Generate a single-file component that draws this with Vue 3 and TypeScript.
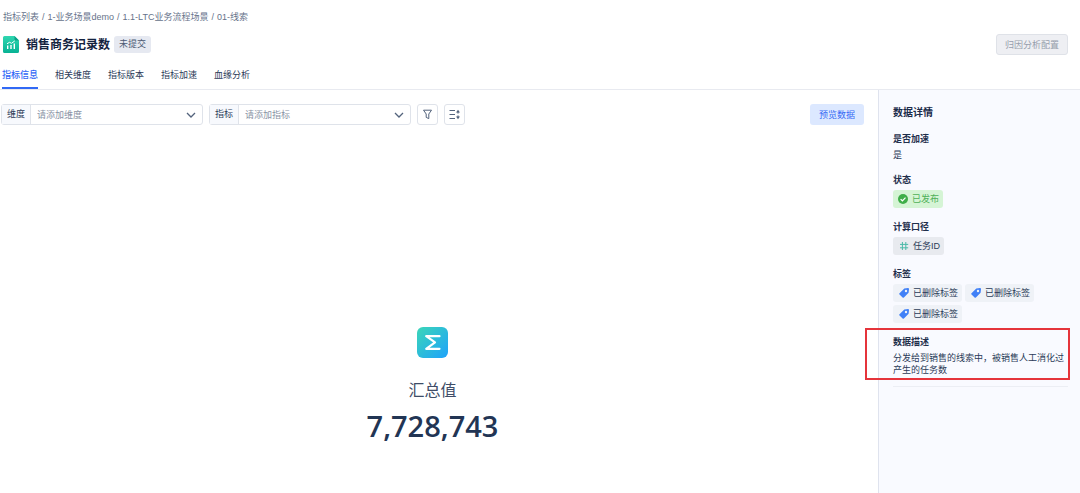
<script setup lang="ts">
import { ref } from 'vue'

interface Field {
  id: string
  label: string
  placeholder: string
}

const crumbs: string[] = ['指标列表', '1-业务场景demo', '1.1-LTC业务流程场景', '01-线索']
const tabs: string[] = ['指标信息', '相关维度', '指标版本', '指标加速', '血缘分析']
const activeTab = ref(tabs[0])
const fields: Field[] = [
  { id: 'dimension', label: '维度', placeholder: '请添加维度' },
  { id: 'metric', label: '指标', placeholder: '请添加指标' },
]
const tags: string[] = ['已删除标签', '已删除标签', '已删除标签']
const total = (7728743).toLocaleString('en-US')
</script>

<template>
  <div class="page">
    <header class="header">
      <nav class="crumbs">
        <template v-for="(crumb, i) in crumbs" :key="crumb">
          <span v-if="i > 0">/</span>
          <a href="#">{{ crumb }}</a>
        </template>
      </nav>
      <div class="title-row">
        <svg class="title-icon" viewBox="0 0 16 17">
          <defs>
            <linearGradient id="doc" x1="0" y1="0" x2="0" y2="1">
              <stop offset="0" stop-color="#2fd6b0" />
              <stop offset="1" stop-color="#08b294" />
            </linearGradient>
          </defs>
          <path d="M1.5 0H11.5L16 4.5V15.5A1.5 1.5 0 0 1 14.5 17H1.5A1.5 1.5 0 0 1 0 15.5V1.5A1.5 1.5 0 0 1 1.5 0Z" fill="url(#doc)" />
          <path d="M11.5 0L16 4.5H12.5A1 1 0 0 1 11.5 3.5Z" fill="#0b9f86" />
          <path d="M4 7.8L6.5 6.3L8.5 7.3L11.8 4.9" fill="none" stroke="#fff" stroke-width="1" />
          <path d="M4.7 9.5V13M8 9V13M11.3 7.5V13" stroke="#fff" stroke-width="1.4" />
        </svg>
        <h1>销售商务记录数</h1>
        <span class="draft">未提交</span>
        <button class="config" type="button" disabled>归因分析配置</button>
      </div>
      <div class="tabs" role="tablist">
        <button
          v-for="tab in tabs"
          :key="tab"
          type="button"
          role="tab"
          :aria-selected="tab === activeTab"
          :class="{ active: tab === activeTab }"
          @click="activeTab = tab"
        >{{ tab }}</button>
      </div>
    </header>

    <div class="body">
      <main class="main">
        <div class="toolbar">
          <div v-for="field in fields" :key="field.id" class="field">
            <label :for="field.id">{{ field.label }}</label>
            <div class="picker">
              <select :id="field.id">
                <option>{{ field.placeholder }}</option>
              </select>
              <svg viewBox="0 0 10 6"><path d="M1 1L5 5L9 1" fill="none" stroke="#53637c" stroke-width="1.3" /></svg>
            </div>
          </div>
          <button class="tool" type="button" aria-label="筛选">
            <svg viewBox="0 0 11 11"><path d="M1.5 1.2H9.5L6.8 5V9.6L4.2 8.4V5Z" fill="none" stroke="#53637c" stroke-linejoin="round" /></svg>
          </button>
          <button class="tool" type="button" aria-label="排序">
            <svg viewBox="0 0 11 11">
              <path d="M.5 1.5H6M.5 5.5H6M.5 9.5H6M9 2V4.6M9 6.4V9" fill="none" stroke="#53637c" stroke-width="1.2" />
              <path d="M7 3.6L9 .8L11 3.6ZM7 7.4L9 10.2L11 7.4Z" fill="#53637c" />
            </svg>
          </button>
          <button class="preview" type="button">预览数据</button>
        </div>
        <section class="summary">
          <svg class="sigma" viewBox="0 0 31 31">
            <defs>
              <linearGradient id="sum" x1="0" y1="0" x2="1" y2="1">
                <stop offset="0" stop-color="#3bd6b8" />
                <stop offset="1" stop-color="#1ea2fb" />
              </linearGradient>
            </defs>
            <rect width="31" height="31" rx="6" fill="url(#sum)" />
            <path d="M22.5 9.2H9.2L18 15.3L9.2 21.8H22.5" fill="none" stroke="#fff" stroke-width="2.2" stroke-linecap="round" stroke-linejoin="round" />
          </svg>
          <div class="summary-label">汇总值</div>
          <div class="summary-value">{{ total }}</div>
        </section>
      </main>

      <aside class="details">
        <h2>数据详情</h2>
        <section>
          <h3>是否加速</h3>
          <p>是</p>
        </section>
        <section>
          <h3>状态</h3>
          <span class="chip published">
            <svg viewBox="0 0 10 10"><circle cx="5" cy="5" r="5" fill="#3fae49" /><path d="M2.6 5.1L4.4 6.8L7.5 3.6" fill="none" stroke="#fff" stroke-width="1.2" /></svg>
            已发布
          </span>
        </section>
        <section>
          <h3>计算口径</h3>
          <span class="chip caliber">
            <svg viewBox="0 0 10 10"><path d="M3.4 1V9M6.8 1V9M1 3.4H9.2M1 6.8H9.2" fill="none" stroke="#4bb9a8" /></svg>
            任务ID
          </span>
        </section>
        <section>
          <h3>标签</h3>
          <div class="chips">
            <span v-for="(tag, i) in tags" :key="i" class="chip">
              <svg viewBox="0 0 10 10">
                <path d="M5.3 .4L9 0Q10 0 10 .9L9.6 4.7L4.9 9.5Q4.2 10.1 3.6 9.5L.5 6.4Q-.1 5.8 .5 5.2Z" fill="#4080f7" />
                <circle cx="7" cy="3" r="1.2" fill="#eff2f7" />
              </svg>
              {{ tag }}
            </span>
          </div>
        </section>
        <section class="description">
          <h3>数据描述</h3>
          <p>分发给到销售的线索中，被销售人工消化过产生的任务数</p>
        </section>
      </aside>
    </div>
  </div>
</template>

<style>
body {
  margin: 0;
}
</style>

<style scoped>
.page {
  display: flex;
  flex-direction: column;
  min-height: 100vh;
  background: #fff;
  color: #2b3b58;
  font: 9px/12px "Liberation Sans", "Noto Sans CJK SC", sans-serif;
}
.page * {
  box-sizing: border-box;
}
h1, h2, h3, p {
  margin: 0;
}
button, select {
  margin: 0;
  padding: 0;
  border: 0;
  background: none;
  color: inherit;
  font: inherit;
}
svg {
  flex: none;
  display: block;
}
.header {
  border-bottom: 1px solid #e8eaf0;
  padding: 11px 12px 0 2px;
}
.crumbs {
  display: flex;
  gap: 3px;
  padding-left: 1px;
  color: #66728a;
}
.crumbs a {
  color: inherit;
  text-decoration: none;
}
.title-row {
  display: flex;
  align-items: center;
  height: 21px;
  margin-top: 11px;
}
.title-icon {
  width: 16px;
  height: 17px;
  margin-left: 1px;
}
h1 {
  margin-left: 7px;
  color: #14233f;
  font-size: 12px;
  line-height: 16px;
}
.draft {
  margin-left: 4px;
  padding: 3px 5px;
  border-radius: 3px;
  background: #e6e9f1;
  color: #4b5973;
  line-height: 11px;
}
.config {
  height: 21px;
  margin-left: auto;
  padding: 0 8px;
  border: 1px solid #dfe2e8;
  border-radius: 3px;
  background: #eeeff3;
  color: #969eac;
}
.tabs {
  display: flex;
  gap: 17px;
  margin-top: 11px;
}
.tabs button {
  height: 23px;
  padding-bottom: 3px;
  border-bottom: 2px solid transparent;
}
.tabs .active {
  border-color: #3169f5;
  color: #2f66f6;
  font-weight: 500;
}
.body {
  display: flex;
  flex: 1;
}
.main {
  flex: 1;
  padding: 14px 14px 0 1px;
}
.toolbar {
  display: flex;
  gap: 6px;
}
.field {
  display: flex;
  width: 202px;
  height: 21px;
  border: 1px solid #dfe3ea;
  border-radius: 3px;
}
.field label {
  padding: 0 5px;
  border-right: 1px solid #dfe3ea;
  background: #f7f9fd;
  line-height: 19px;
}
.picker {
  position: relative;
  flex: 1;
}
.picker select {
  width: 100%;
  height: 19px;
  padding: 0 20px 0 6px;
  appearance: none;
  color: #8993a5;
}
.picker svg {
  position: absolute;
  top: 7px;
  right: 6px;
  width: 10px;
  height: 6px;
  pointer-events: none;
}
.tool {
  display: grid;
  place-items: center;
  width: 21px;
  height: 21px;
  border: 1px solid #dfe3ea;
  border-radius: 3px;
}
.tool svg {
  width: 11px;
  height: 11px;
}
.preview {
  height: 21px;
  margin-left: auto;
  padding: 0 9px;
  border-radius: 3px;
  background: #dce8ff;
  color: #356af5;
}
.summary {
  display: flex;
  flex-direction: column;
  align-items: center;
  padding: 202px 0 32px;
}
.sigma {
  width: 31px;
  height: 31px;
}
.summary-label {
  margin-top: 21px;
  color: #3e4c67;
  font-size: 16px;
  line-height: 24px;
}
.summary-value {
  margin-top: 5px;
  color: #223554;
  font: 600 29px/36px "Open Sans", "Noto Sans", sans-serif;
}
.details {
  display: flex;
  flex-direction: column;
  gap: 13px;
  width: 202px;
  padding: 16px 12px 16px 14px;
  border-left: 1px solid #dfe3ee;
  background: #f9faff;
}
h2 {
  color: #1b2b49;
  font-size: 10px;
  line-height: 14px;
}
h3 {
  margin-bottom: 4px;
  color: #1f2f4c;
  font-size: 9px;
  line-height: 12px;
}
.chips {
  display: flex;
  flex-wrap: wrap;
  gap: 3px;
}
.chip {
  display: inline-flex;
  align-items: center;
  gap: 4px;
  height: 18px;
  padding: 0 4px 0 6px;
  border-radius: 3px;
  background: #eff2f7;
  vertical-align: top;
}
.chip svg {
  width: 10px;
  height: 10px;
}
.published {
  gap: 4px;
  padding-left: 5px;
  background: #d5f4d5;
  color: #4fb058;
}
.caliber {
  background: #e8eaef;
}
.description {
  position: relative;
  padding-bottom: 10px;
  border-bottom: 1px solid #eceef4;
}
/* Highlight frame that reaches over the panel's left edge */
.description::after {
  content: "";
  position: absolute;
  inset: -8px -2px 6px -28px;
  border: 2px solid #e5343b;
  pointer-events: none;
}
</style>
